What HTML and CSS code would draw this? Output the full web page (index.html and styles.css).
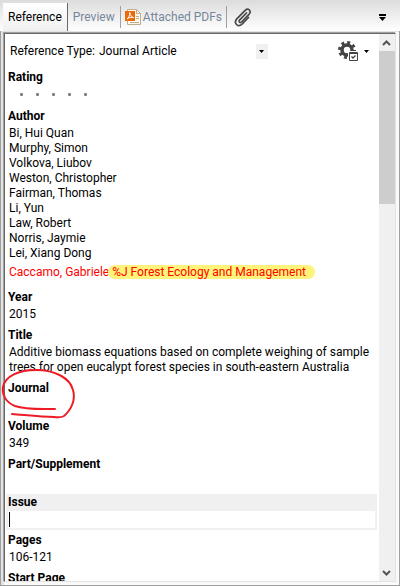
FILE: index.html
```
<!DOCTYPE html>
<html lang="en">
<head>
    <meta charset="UTF-8">
    <meta name="viewport" content="width=device-width, initial-scale=1.0">
    <title>Reference</title>
    <link rel="stylesheet" href="styles.css">
</head>
<body>
    <div class="window">
        <nav class="tabs">
            <button type="button" class="tab active">Reference</button>
            <button type="button" class="tab">Preview</button>
            <span class="divider"></span>
            <button type="button" class="tab pdf-tab">
                <svg width="16" height="16" viewBox="0 0 16 16">
                    <path d="M2.500 .5H11.500L15.500 4.500V15.500H2.500Z" fill="#fffaf0" stroke="#c0ad8c"/>
                    <path d="M11.500 .5V4.500H15.500M11 7.500H14M11 9.500H14M5 13.500H14" fill="none" stroke="#c0ad8c"/>
                    <rect y="2" width="10" height="10" fill="#ea6a0a"/>
                    <path d="M2 10C4 8.500 5 6 4.800 3.500C5 6 6.500 8 8.500 8.500C6 8 4 8.500 2 10" fill="none" stroke="#fff"/>
                </svg>
                Attached PDFs
            </button>
            <span class="divider"></span>
            <button type="button" class="tab clip-tab" aria-label="Attach file">
                <svg width="18" height="19" viewBox="0 0 18 19">
                    <path d="M12.500 5L5.500 12.200C4.200 13.700 6.200 15.300 7.500 14L15 6.300C18 3 14.200 -.5 11.200 2.300L3 10.700C-1 15 4 20 8 16.200L14.500 9.500" fill="none" stroke="#4a4a4a" stroke-width="1.700" stroke-linecap="round"/>
                </svg>
            </button>
            <button type="button" class="menu-button" aria-label="More tabs">
                <svg width="7" height="7" viewBox="0 0 7 7"><path d="M0 0H7V2H0ZM0 3H7L3.500 7Z"/></svg>
            </button>
        </nav>

        <div class="frame">
            <main class="panel">
                <div class="content">
                    <div class="type-row">
                        <span class="type-label">Reference Type:</span>
                        <button type="button" class="type-select" aria-label="Reference Type: Journal Article">
                            <span>Journal Article</span>
                            <span class="type-arrow"><svg width="5" height="3" viewBox="0 0 5 3"><path d="M0 0H5L2.500 3Z"/></svg></span>
                        </button>
                        <button type="button" class="settings" aria-label="Settings">
                            <svg width="20" height="20" viewBox="0 0 20 20">
                                <circle cx="9" cy="9" r="5" fill="none" stroke="#444" stroke-width="3.500"/>
                                <circle cx="9" cy="9" r="7.500" fill="none" stroke="#444" stroke-width="3" stroke-dasharray="2.900 2.990"/>
                                <rect x="10" y="10" width="10" height="10" fill="#fff"/>
                                <path d="M11.500 11.500H19.500V19.500H11.500ZM11 12.500H20" fill="#fff" stroke="#444"/>
                                <path d="M13.500 15.500L15 17L17.500 14.500" fill="none" stroke="#444" stroke-width="1.300"/>
                            </svg>
                            <svg width="5" height="3" viewBox="0 0 5 3"><path d="M0 0H5L2.500 3Z"/></svg>
                        </button>
                    </div>

                    <section class="field">
                        <h2>Rating</h2>
                        <div class="rating"><i></i><i></i><i></i><i></i><i></i></div>
                    </section>
                    <section class="field">
                        <h2>Author</h2>
                        <div class="value">
                            Bi, Hui Quan<br>
                            Murphy, Simon<br>
                            Volkova, Liubov<br>
                            Weston, Christopher<br>
                            Fairman, Thomas<br>
                            Li, Yun<br>
                            Law, Robert<br>
                            Norris, Jaymie<br>
                            Lei, Xiang Dong
                            <p class="new-author">Caccamo, Gabriele <mark>%J Forest Ecology and Management</mark></p>
                        </div>
                    </section>
                    <section class="field">
                        <h2>Year</h2>
                        <div class="value">2015</div>
                    </section>
                    <section class="field">
                        <h2>Title</h2>
                        <div class="value">Additive biomass equations based on complete weighing of sample trees for open eucalypt forest species in south-eastern Australia</div>
                    </section>
                    <section class="field">
                        <h2>Journal</h2>
                        <div class="value"></div>
                        <svg class="pen" width="76" height="54" viewBox="0 0 76 54">
                            <path d="M54 41C40 41 25 42 14 38C4 34 1 26 2 19C4 8 18 2 35 2C54 2 69 10 72 22C75 32 70 42 63 48Q60 50 53 49C40 49 24 47 11 46" fill="none" stroke="#ed1c24" stroke-width="2" stroke-linecap="round"/>
                        </svg>
                    </section>
                    <section class="field">
                        <h2>Volume</h2>
                        <div class="value">349</div>
                    </section>
                    <section class="field">
                        <h2>Part/Supplement</h2>
                        <div class="value"></div>
                    </section>
                    <section class="field selected">
                        <h2><label for="issue">Issue</label></h2>
                        <div class="edit"><span class="caret"></span><input type="text" id="issue"></div>
                    </section>
                    <section class="field">
                        <h2>Pages</h2>
                        <div class="value">106-121</div>
                    </section>
                    <section class="field">
                        <h2>Start Page</h2>
                        <div class="value"></div>
                    </section>
                </div>

                <div class="scrollbar">
                    <svg width="16" height="17" viewBox="0 0 16 17"><path d="M4 11L7.500 7.500L11 11" fill="none" stroke="#555" stroke-width="2"/></svg>
                    <div class="thumb"></div>
                    <svg width="16" height="17" viewBox="0 0 16 17"><path d="M4 7L7.500 10.500L11 7" fill="none" stroke="#555" stroke-width="2"/></svg>
                </div>
            </main>
        </div>
    </div>
</body>
</html>
```
FILE: styles.css
```
* {
    box-sizing: border-box;
}
body {
    margin: 0;
    font-family: Roboto, 'Open Sans', sans-serif;
    font-size: 12px;
    line-height: 15px;
    color: #000;
}
button {
    font: inherit;
    color: inherit;
    background: none;
    border: none;
    padding: 0;
}
svg {
    display: block;
    flex: none;
}
.window {
    display: flex;
    flex-direction: column;
    height: 100vh;
}
.tabs {
    display: flex;
    align-items: center;
    flex: none;
    height: 31px;
    padding: 3px 14px 0 3px;
    background: linear-gradient(#dcdcdc, #fff);
}
.tab {
    display: flex;
    align-items: center;
    gap: 2px;
    height: 28px;
    padding: 0 5px;
    color: #76869a;
    white-space: nowrap;
}
.tab.active {
    color: #000;
    background: linear-gradient(#fff, #f0f0f0);
    border-right: 1px solid #696969;
}
.pdf-tab {
    padding: 0 4px;
}
.clip-tab {
    padding: 0 7px;
}
.divider {
    width: 1px;
    height: 22px;
    background-color: #a0a0a0;
}
.menu-button {
    margin-left: auto;
}
.frame {
    display: flex;
    flex: 1;
    min-height: 0;
    padding: 2px 3px 3px;
    border: 1px solid #a0a0a0;
    border-top: none;
    background-color: #fafafa;
    box-shadow: inset 3px 1px #e3e3e3;
}
.panel {
    display: flex;
    flex: 1;
    min-width: 0;
    border: 1px solid #e3e3e3;
    border-top-color: #696969;
    border-left-color: #696969;
    background-color: #fff;
    box-shadow: -1px -1px #a0a0a0;
}
.content {
    flex: 1;
    min-width: 0;
    padding: 6px 2px 0 1px;
    overflow-x: visible;
    overflow-y: clip;
}
.type-row {
    display: flex;
    align-items: center;
    height: 22px;
    margin-bottom: 7px;
    padding: 0 8px 0 4px;
}
.type-select {
    display: flex;
    align-items: center;
    justify-content: space-between;
    width: 169px;
    margin-left: 4px;
}
.type-arrow {
    display: flex;
    align-items: center;
    justify-content: center;
    width: 12px;
    height: 15px;
    background-color: #f0f0f0;
}
.settings {
    display: flex;
    align-items: center;
    gap: 6px;
    margin-left: auto;
}
.field {
    position: relative;
    margin-bottom: 2px;
    padding-bottom: 2px;
}
.field h2 {
    margin: 0;
    padding: 1px 2px;
    font-size: 12px;
    line-height: 15px;
}
.value {
    min-height: 17px;
    padding: 1px 3px;
}
.rating {
    display: flex;
    gap: 13px;
    height: 18px;
    padding: 7px 14px;
}
.rating i {
    width: 3px;
    height: 3px;
    border-radius: 1px;
    background-color: #808080;
}
.new-author {
    margin: 4px 0;
    color: #f00;
}
.new-author mark {
    margin-left: -4px;
    padding: 0 9px 0 4px;
    border-radius: 7px;
    background-color: #fff47a;
    color: inherit;
}
/* red pen circle drawn over the field */
.pen {
    position: absolute;
    top: -12px;
    left: -5px;
    z-index: 1;
}
.selected {
    padding: 0 2px 2px;
    background-color: #f0f0f0;
}
.selected h2 {
    padding: 1px 0;
}
.edit {
    display: flex;
    align-items: center;
    height: 17px;
    padding: 1px;
    background-color: #fff;
}
.caret {
    width: 1px;
    height: 15px;
    background-color: #000;
}
.edit input {
    flex: 1;
    min-width: 0;
    height: 15px;
    padding: 0;
    border: none;
    outline: none;
    font: inherit;
}
.scrollbar {
    display: flex;
    flex-direction: column;
    flex: none;
    width: 16px;
    background-color: #f0f0f0;
}
.thumb {
    height: 153px;
    margin-bottom: auto;
    background-color: #cdcdcd;
}
```
